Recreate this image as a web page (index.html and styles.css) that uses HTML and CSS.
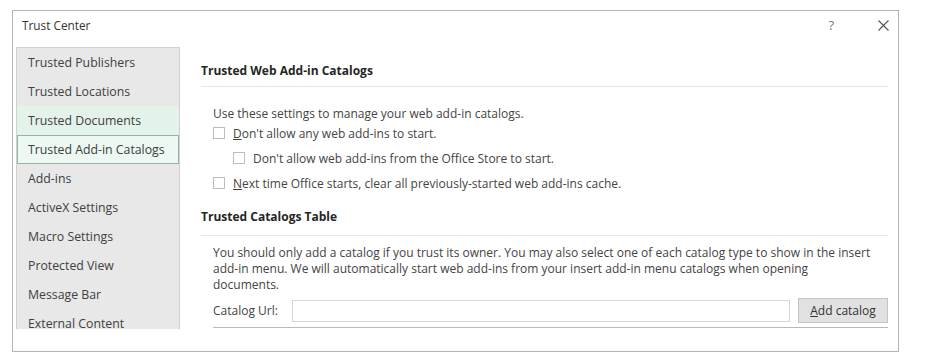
FILE: index.html
```html
<!DOCTYPE html>
<html>
<head>
  <title>Trust Center</title>
  <link rel="stylesheet" href="styles.css">
</head>
<body>
  <div class="dialog">
    <div class="titlebar">
      <span class="title">Trust Center</span>
      <div class="actions">
        <span class="help">?</span>
        <span class="close">
          <svg width="11" height="11" viewBox="0 0 11 11"><path d="M0.5 0.5 L10.5 10.5 M10.5 0.5 L0.5 10.5" stroke="#555" stroke-width="1.1" fill="none"/></svg>
        </span>
      </div>
    </div>

    <div class="main">
      <ul class="nav">
        <li>Trusted Publishers</li>
        <li>Trusted Locations</li>
        <li class="hover">Trusted Documents</li>
        <li class="selected">Trusted Add-in Catalogs</li>
        <li>Add-ins</li>
        <li>ActiveX Settings</li>
        <li>Macro Settings</li>
        <li>Protected View</li>
        <li>Message Bar</li>
        <li>External Content</li>
      </ul>

      <div class="content">
        <h2 class="first">Trusted Web Add-in Catalogs</h2>
        <div class="rule"></div>
        <div class="section">
          <p class="intro">Use these settings to manage your web add-in catalogs.</p>
          <div class="check first-check"><span class="box"></span><span><u>D</u>on't allow any web add-ins to start.</span></div>
          <div class="check sub"><span class="box"></span><span>Don't allow web add-ins from the Office Store to start.</span></div>
          <div class="check"><span class="box"></span><span><u>N</u>ext time Office starts, clear all previously-started web add-ins cache.</span></div>
        </div>

        <h2 class="second">Trusted Catalogs Table</h2>
        <div class="rule rule-2"></div>
        <div class="section">
          <p class="note">You should only add a catalog if you trust its owner. You may also select one of each catalog type to show in the insert<br>add-in menu. We will automatically start web add-ins from your insert add-in menu catalogs when opening<br>documents.</p>
          <div class="url-row">
            <label>Catalog Url:</label>
            <div class="url-input"></div>
            <button class="add-button"><u>A</u>dd catalog</button>
          </div>
          <div class="table"></div>
        </div>
      </div>
    </div>
  </div>
</body>
</html>
```

FILE: styles.css
```css
body {
  margin: 0;
  background-color: #fff;
  font-family: "Open Sans", "Noto Sans", sans-serif;
  font-size: 12px;
  color: #444;
}

.dialog {
  margin: 10px 0 0 12px;
  width: 885px;
  height: 340px;
  border: 1px solid #b4b4b4;
}

.titlebar {
  height: 36px;
  display: flex;
  align-items: flex-start;
  justify-content: space-between;
  padding: 6px 0 0 9px;
  box-sizing: border-box;
}

.title {
  line-height: 16px;
  font-size: 11.8px;
  color: #333;
}

.actions {
  display: flex;
  align-items: center;
  gap: 44px;
  margin-right: 9px;
  height: 16px;
}

.help {
  font-size: 13px;
  color: #777;
}

.close {
  display: flex;
}

.main {
  display: flex;
  height: 282px;
  overflow: hidden;
}

.nav {
  list-style: none;
  margin: 0 0 0 3px;
  padding: 0;
  width: 164px;
  flex-shrink: 0;
  box-sizing: border-box;
  background-color: #e8e8e8;
  border: 1px solid #d0d0d0;
  border-bottom: none;
}

.nav li {
  height: 29px;
  line-height: 29px;
  padding-left: 11px;
  font-size: 12.3px;
  color: #404040;
  white-space: nowrap;
  box-sizing: border-box;
}

.nav li.hover {
  background-color: #e4f3ea; /* mouse-over */
}

.nav li.selected {
  background-color: #ecf8f1;
  border: 1px solid #93b79f;
  line-height: 27px;
  padding-left: 10px;
}

.content {
  flex: 1;
  padding: 0 10px 0 21px;
}

h2 {
  margin: 0;
  font-size: 12px;
  font-weight: bold;
  line-height: 16px;
  color: #262626;
}

h2.first {
  margin-top: 16px;
}

h2.second {
  margin-top: 18px;
}

.rule {
  height: 1px;
  background-color: #e6e6e6;
  margin-top: 7px;
}

.rule-2 {
  margin-top: 10px;
}

.section {
  padding-left: 12px;
}

p {
  margin: 0;
  line-height: 16px;
}

.intro {
  margin-top: 19px;
}

.check {
  display: flex;
  align-items: center;
  gap: 8px;
  height: 16px;
  margin-top: 9px;
}

.check.first-check {
  margin-top: 3px;
}

.check.sub {
  margin-left: 20px;
}

.box {
  width: 10px;
  height: 10px;
  border: 1px solid #bdbdbd;
  background-color: #fff;
}

.note {
  margin-top: 9px;
  white-space: nowrap;
}

.url-row {
  display: flex;
  align-items: center;
  margin-top: 5px;
  height: 25px;
}

.url-row label {
  width: 79px;
}

.url-input {
  width: 496px;
  height: 20px;
  border: 1px solid #d6d6d6;
  background-color: #fff;
}

.add-button {
  margin-left: 8px;
  width: 90px;
  height: 25px;
  font-family: inherit;
  font-size: 12px;
  color: #333;
  background-color: #e1e1e1;
  border: 1px solid #c4c4c4;
  padding: 0;
}

.table {
  margin-top: 4px;
  height: 20px;
  border-top: 1px solid #b9b9b9;
}
```
